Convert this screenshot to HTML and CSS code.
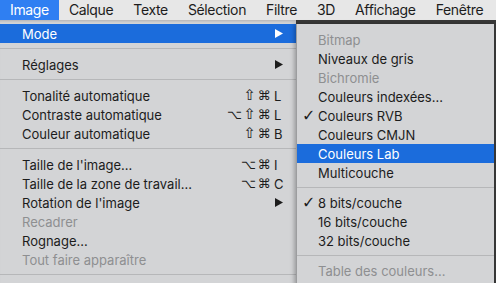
FILE: index.html
```html
<!DOCTYPE html>
<html lang="fr">
<head>
    <meta charset="UTF-8">
    <meta name="viewport" content="width=device-width, initial-scale=1.0">
    <title>Menu Image</title>
    <link rel="stylesheet" href="styles.css">
</head>
<body>
    <nav class="menubar">
        <span class="menubar-item active">Image</span>
        <span class="menubar-item">Calque</span>
        <span class="menubar-item">Texte</span>
        <span class="menubar-item">Sélection</span>
        <span class="menubar-item">Filtre</span>
        <span class="menubar-item">3D</span>
        <span class="menubar-item">Affichage</span>
        <span class="menubar-item">Fenêtre</span>
    </nav>

    <div class="menus">
        <ul class="menu main-menu">
            <li class="item selected">
                <span class="label">Mode</span>
                <svg class="arrow" width="8" height="9" viewBox="0 0 8 9"><path d="M0 0L8 4.5L0 9Z"/></svg>
            </li>
            <li class="sep"></li>
            <li class="item">
                <span class="label">Réglages</span>
                <svg class="arrow" width="8" height="9" viewBox="0 0 8 9"><path d="M0 0L8 4.5L0 9Z"/></svg>
            </li>
            <li class="sep"></li>
            <li class="item">
                <span class="label">Tonalité automatique</span>
                <span class="mods"><span class="shift">⇧</span>⌘</span><span class="key">L</span>
            </li>
            <li class="item">
                <span class="label">Contraste automatique</span>
                <span class="mods">⌥<span class="shift">⇧</span>⌘</span><span class="key">L</span>
            </li>
            <li class="item">
                <span class="label">Couleur automatique</span>
                <span class="mods"><span class="shift">⇧</span>⌘</span><span class="key">B</span>
            </li>
            <li class="sep"></li>
            <li class="item">
                <span class="label">Taille de l'image...</span>
                <span class="mods">⌥⌘</span><span class="key">I</span>
            </li>
            <li class="item">
                <span class="label">Taille de la zone de travail...</span>
                <span class="mods">⌥⌘</span><span class="key">C</span>
            </li>
            <li class="item">
                <span class="label">Rotation de l'image</span>
                <svg class="arrow" width="8" height="9" viewBox="0 0 8 9"><path d="M0 0L8 4.5L0 9Z"/></svg>
            </li>
            <li class="item disabled"><span class="label">Recadrer</span></li>
            <li class="item"><span class="label">Rognage...</span></li>
            <li class="item disabled"><span class="label">Tout faire apparaître</span></li>
            <li class="sep"></li>
        </ul>

        <ul class="menu submenu">
            <li class="item disabled"><span class="check"></span><span class="label">Bitmap</span></li>
            <li class="item"><span class="check"></span><span class="label">Niveaux de gris</span></li>
            <li class="item disabled"><span class="check"></span><span class="label">Bichromie</span></li>
            <li class="item"><span class="check"></span><span class="label">Couleurs indexées...</span></li>
            <li class="item"><span class="check">✓</span><span class="label">Couleurs RVB</span></li>
            <li class="item"><span class="check"></span><span class="label">Couleurs CMJN</span></li>
            <li class="item selected"><span class="check"></span><span class="label">Couleurs Lab</span></li>
            <li class="item"><span class="check"></span><span class="label">Multicouche</span></li>
            <li class="sep"></li>
            <li class="item"><span class="check">✓</span><span class="label">8 bits/couche</span></li>
            <li class="item"><span class="check"></span><span class="label">16 bits/couche</span></li>
            <li class="item"><span class="check"></span><span class="label">32 bits/couche</span></li>
            <li class="sep"></li>
            <li class="item disabled"><span class="check"></span><span class="label">Table des couleurs...</span></li>
        </ul>
    </div>
</body>
</html>
```

FILE: styles.css
```css
* {
    margin: 0;
    padding: 0;
    box-sizing: border-box;
}

body {
    height: 283px;
    overflow: hidden;
    background: #383838;
    font-family: 'Inter', 'Liberation Sans', sans-serif;
    color: #1c1c1c;
}

.menubar {
    display: flex;
    height: 20px;
    overflow: hidden;
    background: #e7e7e7;
    font-size: 14px;
    line-height: 20px;
    letter-spacing: -0.35px;
}

.menubar-item {
    padding: 0 10px;
    white-space: nowrap;
}

.menubar-item.active {
    background: #2f7ff2;
    color: white;
}

.menus {
    display: flex;
    align-items: flex-start;
}

.menu {
    list-style: none;
    background: #d3d4d6;
    font-size: 13px;
}

.main-menu {
    width: 296px;
    height: 263px;
    padding-top: 4px;
    box-shadow: inset 0 3px 3px -2px rgba(0, 0, 0, 0.18);
}

.submenu {
    width: 198px;
    height: 262px;
    margin-top: 4px;
    padding-top: 6px;
    border-left: 1px solid #9c9d9f;
    box-shadow: -2px 0 4px rgba(0, 0, 0, 0.25);
}

.item {
    display: flex;
    align-items: center;
    height: 19px;
    white-space: nowrap;
}

.main-menu .item {
    padding: 0 12px 0 22px;
}

.submenu .item {
    padding: 0 12px 0 5px;
}

.label {
    flex: 1;
}

.item.selected {
    background: #1b6cdc;
    color: white;
}

.item.disabled {
    color: #8e8f91;
}

.arrow {
    fill: currentColor;
    margin-right: 1px;
}

.mods {
    font-family: 'DejaVu Sans', sans-serif;
    font-size: 13px;
    letter-spacing: 1.5px;
    margin-right: 2px;
}

.shift {
    font-size: 15px;
    line-height: 1;
}

.key {
    width: 10px;
}

.check {
    width: 16px;
    font-family: 'DejaVu Sans', sans-serif;
    font-size: 16px;
    font-weight: bold;
    line-height: 1;
}

.sep {
    height: 12px;
    padding: 5px 0 6px;
}

.sep::after {
    content: '';
    display: block;
    height: 1px;
    background: #b6b7b9;
}

.submenu .sep {
    height: 11px;
    padding: 5px 0;
}
```
